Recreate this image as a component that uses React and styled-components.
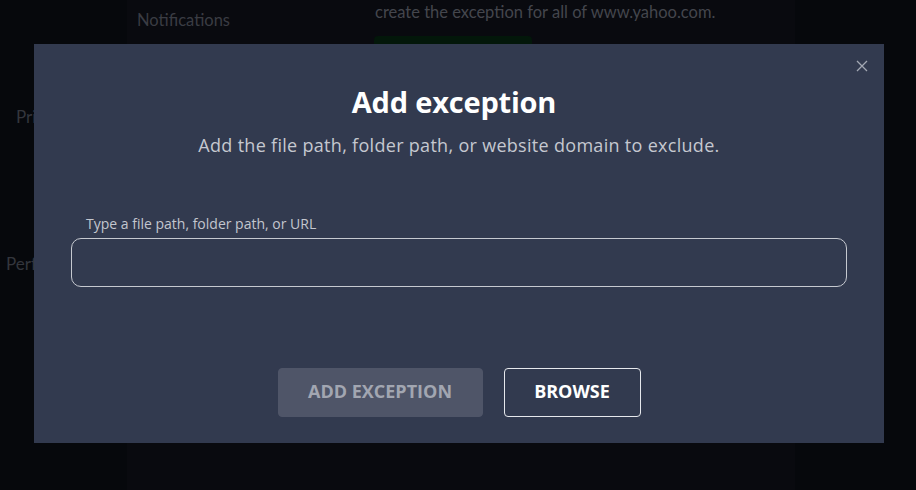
import styled, { createGlobalStyle } from "styled-components";

const GlobalStyle = createGlobalStyle`
  html, body {
    margin: 0;
    padding: 0;
    background: #06080c;
    font-family: "Lato", "Open Sans", sans-serif;
  }
`;

const Page = styled.div`
  position: relative;
  width: 916px;
  height: 490px;
  overflow: hidden;
  display: grid;
  grid-template-columns: 127px 668px 1fr;
  background: #06080c;
`;

const Nav = styled.div`
  display: flex;
  flex-direction: column;
  padding-top: 106px;
  gap: 126px;
`;

const NavItem = styled.div`
  font-size: 17px;
  color: #33363d;
  padding-left: ${(p) => p.$indent}px;
  white-space: nowrap;
`;

const Main = styled.div`
  background: #090a0f;
  display: grid;
  grid-template-columns: 248px 1fr;
`;

const MainNav = styled.div`
  padding: 10px 0 0 10px;
  font-size: 16.5px;
  color: #3a3c43;
`;

const MainBody = styled.div`
  padding-top: 2px;
`;

const DimText = styled.div`
  font-size: 16.5px;
  color: #44464d;
  white-space: nowrap;
`;

const GreenButton = styled.div`
  margin-top: 14px;
  margin-left: -1px;
  width: 158px;
  height: 40px;
  border-radius: 4px;
  background: #03170a;
`;

const Modal = styled.div`
  position: absolute;
  left: 34px;
  top: 44px;
  width: 850px;
  height: 399px;
  background: #323a4f;
  box-sizing: border-box;
  padding: 42px 37px 0;
  display: flex;
  flex-direction: column;
  align-items: center;
  font-family: "Open Sans", "Lato", sans-serif;
`;

const Close = styled.button`
  position: absolute;
  top: 14px;
  right: 14px;
  width: 16px;
  height: 16px;
  padding: 0;
  border: none;
  background: none;
  display: flex;
  align-items: center;
  justify-content: center;
`;

const Title = styled.h2`
  margin: 0;
  padding-right: 10px;
  font-size: 29px;
  font-weight: 700;
  color: #ffffff;
  line-height: 32px;
  letter-spacing: -0.2px;
`;

const Subtitle = styled.p`
  margin: 15px 0 0;
  font-size: 18px;
  color: #c5c8d0;
  line-height: 24px;
  letter-spacing: 0.3px;
`;

const Field = styled.div`
  align-self: stretch;
  margin-top: 58px;
  display: flex;
  flex-direction: column;
`;

const Label = styled.label`
  padding-left: 15px;
  font-size: 14px;
  color: #c3c6ce;
  line-height: 18px;
  margin-bottom: 5px;
`;

const Input = styled.input`
  height: 49px;
  box-sizing: border-box;
  border: 1px solid #c6c9d0;
  border-radius: 10px;
  background: transparent;
  color: #fff;
  font: inherit;
  font-size: 16px;
  padding: 0 15px;
  outline: none;
`;

const Actions = styled.div`
  margin-top: 81px;
  display: flex;
  gap: 21px;
`;

const Button = styled.button`
  height: 49px;
  width: ${(p) => p.$width}px;
  box-sizing: border-box;
  padding: 0 0 3px;
  border-radius: 4px;
  font-family: inherit;
  font-size: 18px;
  font-weight: 700;
  border: 1px solid ${(p) => (p.$primary ? "#4f5568" : "#e6e8ec")};
  background: ${(p) => (p.$primary ? "#4f5568" : "transparent")};
  color: ${(p) => (p.$primary ? "#a2a6b1" : "#ffffff")};
`;

export default function App() {
  return (
    <>
      <GlobalStyle />
      <Page>
        <Nav>
          <NavItem $indent={16}>Privacy</NavItem>
          <NavItem $indent={6}>Performance</NavItem>
        </Nav>
        <Main>
          <MainNav>Notifications</MainNav>
          <MainBody>
            <DimText>create the exception for all of www.yahoo.com.</DimText>
            <GreenButton />
          </MainBody>
        </Main>
        <div />
        <Modal>
          <Close aria-label="Close">
            <svg width="12" height="12" viewBox="0 0 12 12">
              <path d="M1 1L11 11M11 1L1 11" stroke="#a3a8b3" strokeWidth="1.3" />
            </svg>
          </Close>
          <Title>Add exception</Title>
          <Subtitle>Add the file path, folder path, or website domain to exclude.</Subtitle>
          <Field>
            <Label>Type a file path, folder path, or URL</Label>
            <Input />
          </Field>
          <Actions>
            <Button $primary $width={205}>ADD EXCEPTION</Button>
            <Button $width={137}>BROWSE</Button>
          </Actions>
        </Modal>
      </Page>
    </>
  );
}
